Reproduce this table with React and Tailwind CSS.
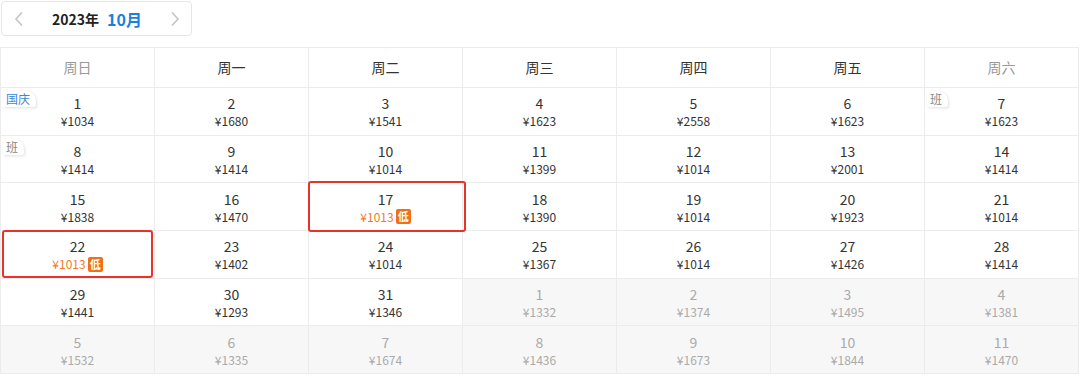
import React from "react";

const weeks = ["周日", "周一", "周二", "周三", "周四", "周五", "周六"];

const rows = [
  [["1", "1034", "国庆"], ["2", "1680"], ["3", "1541"], ["4", "1623"], ["5", "2558"], ["6", "1623"], ["7", "1623", "班"]],
  [["8", "1414", "班"], ["9", "1414"], ["10", "1014"], ["11", "1399"], ["12", "1014"], ["13", "2001"], ["14", "1414"]],
  [["15", "1838"], ["16", "1470"], ["17", "1013", null, "low", "a"], ["18", "1390"], ["19", "1014"], ["20", "1923"], ["21", "1014"]],
  [["22", "1013", null, "low", "b"], ["23", "1402"], ["24", "1014"], ["25", "1367"], ["26", "1014"], ["27", "1426"], ["28", "1414"]],
  [["29", "1441"], ["30", "1293"], ["31", "1346"], ["1", "1332", null, "next"], ["2", "1374", null, "next"], ["3", "1495", null, "next"], ["4", "1381", null, "next"]],
  [["5", "1532", null, "next"], ["6", "1335", null, "next"], ["7", "1674", null, "next"], ["8", "1436", null, "next"], ["9", "1673", null, "next"], ["10", "1844", null, "next"], ["11", "1470", null, "next"]],
];

function Cell({ d }) {
  const [day, price, tag, kind, sel] = d;
  const next = kind === "next";
  const low = kind === "low";
  return (
    <div
      className={`relative h-[47.7px] border-r border-b border-[#ececec] flex flex-col items-center justify-center ${
        next ? "bg-[#f7f7f7]" : "bg-white"
      }`}
    >
      {tag && (
        <span
          className={`absolute left-[2px] top-[3px] h-[16px] pl-[3px] pr-[6px] bg-white text-[12px] leading-[16px] rounded-tr-[10px] rounded-br-[2px] shadow-[1px_1px_3px_rgba(0,0,0,0.12)] ${
            tag === "班" ? "text-[#888]" : "text-[#3c86d9]"
          }`}
        >
          {tag}
        </span>
      )}
      <div className={`text-[14px] leading-[20px] ${next ? "text-[#aaa]" : "text-[#333]"}`}>{day}</div>
      <div className="flex items-center h-[16px]">
        <span
          className={`text-[12px] leading-[16px] ${
            next ? "text-[#aaa]" : low ? "text-[#f37a1f]" : "text-[#333]"
          }`}
        >
          ¥{price}
        </span>
        {low && (
          <span className="ml-[2px] w-[15px] h-[15px] bg-[#f0701a] text-white text-[11px] leading-[15px] font-bold text-center rounded-[2px]">
            低
          </span>
        )}
      </div>
      {sel === "a" && (
        <div className="absolute z-10 left-[-1px] right-[-4px] top-[-2px] bottom-[-2px] border-2 border-[#e8332b] rounded-[3px] pointer-events-none" />
      )}
      {sel === "b" && (
        <div className="absolute z-10 left-[1px] right-[1px] top-[-1px] bottom-[0px] border-2 border-[#e8332b] rounded-[3px] pointer-events-none" />
      )}
    </div>
  );
}

export default function App() {
  return (
    <div
      className="w-[1080px] h-[377px] bg-white overflow-hidden"
      style={{ fontFamily: '"Noto Sans CJK SC", "Noto Sans", sans-serif' }}
    >
      <div className="ml-[1px] mt-[1px] w-[191px] h-[35px] border border-[#e6e6e6] rounded-[4px] flex items-center">
        <svg width="10" height="16" viewBox="0 0 10 16" className="ml-[12px]">
          <path d="M8 1.5 L2 8 L8 14.5" fill="none" stroke="#c4c4c4" strokeWidth="1.6" />
        </svg>
        <span className="ml-[28px] text-[14px] font-bold text-[#222] leading-none">2023年</span>
        <span className="ml-[8px] text-[16px] font-bold text-[#1a7fe0] leading-none">10月</span>
        <svg width="10" height="16" viewBox="0 0 10 16" className="ml-[28px]">
          <path d="M2 1.5 L8 8 L2 14.5" fill="none" stroke="#c4c4c4" strokeWidth="1.6" />
        </svg>
      </div>
      <div className="mt-[11px] w-[1079px] border-l border-t border-[#ececec] grid grid-cols-[repeat(7,154px)]">
        {weeks.map((w, i) => (
          <div
            key={w}
            className={`h-[40px] border-r border-b border-[#ececec] flex items-center justify-center text-[14px] ${
              i === 0 || i === 6 ? "text-[#999]" : "text-[#333]"
            }`}
          >
            {w}
          </div>
        ))}
        {rows.flat().map((d, i) => (
          <Cell key={i} d={d} />
        ))}
      </div>
    </div>
  );
}
